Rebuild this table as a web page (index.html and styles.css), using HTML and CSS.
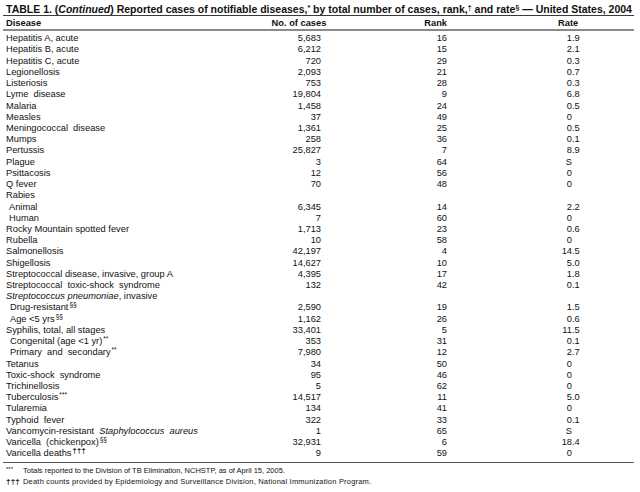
FILE: index.html
```html
<!DOCTYPE html>
<html>
<head>
<meta charset="utf-8">
<link rel="stylesheet" href="styles.css">
</head>
<body>
<div class="page">
  <div class="title">TABLE 1. (<i>Continued</i>) Reported cases of notifiable diseases,<span class="tsup">*</span> by total number of cases, rank,<span class="tsup">†</span> and rate<span class="tsup">§</span> — United States, 2004</div>
  <div class="row head">
    <span class="d">Disease</span>
    <span class="n">No. of cases</span>
    <span class="r">Rank</span>
    <span class="h">Rate</span>
  </div>
  <div class="body">
    <div class="row"><span class="d">Hepatitis A, acute</span><span class="n">5,683</span><span class="r">16</span><span class="t"><span class="i">1</span><span>.9</span></span></div>
    <div class="row"><span class="d">Hepatitis B, acute</span><span class="n">6,212</span><span class="r">15</span><span class="t"><span class="i">2</span><span>.1</span></span></div>
    <div class="row"><span class="d">Hepatitis C, acute</span><span class="n">720</span><span class="r">29</span><span class="t"><span class="i">0</span><span>.3</span></span></div>
    <div class="row"><span class="d">Legionellosis</span><span class="n">2,093</span><span class="r">21</span><span class="t"><span class="i">0</span><span>.7</span></span></div>
    <div class="row"><span class="d">Listeriosis</span><span class="n">753</span><span class="r">28</span><span class="t"><span class="i">0</span><span>.3</span></span></div>
    <div class="row"><span class="d ws">Lyme disease</span><span class="n">19,804</span><span class="r">9</span><span class="t"><span class="i">6</span><span>.8</span></span></div>
    <div class="row"><span class="d">Malaria</span><span class="n">1,458</span><span class="r">24</span><span class="t"><span class="i">0</span><span>.5</span></span></div>
    <div class="row"><span class="d">Measles</span><span class="n">37</span><span class="r">49</span><span class="t"><span class="i">0</span><span></span></span></div>
    <div class="row"><span class="d ws">Meningococcal disease</span><span class="n">1,361</span><span class="r">25</span><span class="t"><span class="i">0</span><span>.5</span></span></div>
    <div class="row"><span class="d">Mumps</span><span class="n">258</span><span class="r">36</span><span class="t"><span class="i">0</span><span>.1</span></span></div>
    <div class="row"><span class="d">Pertussis</span><span class="n">25,827</span><span class="r">7</span><span class="t"><span class="i">8</span><span>.9</span></span></div>
    <div class="row"><span class="d">Plague</span><span class="n">3</span><span class="r">64</span><span class="t"><span class="i">S</span><span></span></span></div>
    <div class="row"><span class="d">Psittacosis</span><span class="n">12</span><span class="r">56</span><span class="t"><span class="i">0</span><span></span></span></div>
    <div class="row"><span class="d">Q fever</span><span class="n">70</span><span class="r">48</span><span class="t"><span class="i">0</span><span></span></span></div>
    <div class="row"><span class="d">Rabies</span><span class="n"></span><span class="r"></span><span class="t"></span></div>
    <div class="row"><span class="d sub">Animal</span><span class="n">6,345</span><span class="r">14</span><span class="t"><span class="i">2</span><span>.2</span></span></div>
    <div class="row"><span class="d sub">Human</span><span class="n">7</span><span class="r">60</span><span class="t"><span class="i">0</span><span></span></span></div>
    <div class="row"><span class="d">Rocky Mountain spotted fever</span><span class="n">1,713</span><span class="r">23</span><span class="t"><span class="i">0</span><span>.6</span></span></div>
    <div class="row"><span class="d">Rubella</span><span class="n">10</span><span class="r">58</span><span class="t"><span class="i">0</span><span></span></span></div>
    <div class="row"><span class="d">Salmonellosis</span><span class="n">42,197</span><span class="r">4</span><span class="t"><span class="i">14</span><span>.5</span></span></div>
    <div class="row"><span class="d">Shigellosis</span><span class="n">14,627</span><span class="r">10</span><span class="t"><span class="i">5</span><span>.0</span></span></div>
    <div class="row"><span class="d">Streptococcal disease, invasive, group A</span><span class="n">4,395</span><span class="r">17</span><span class="t"><span class="i">1</span><span>.8</span></span></div>
    <div class="row"><span class="d ws">Streptococcal toxic-shock syndrome</span><span class="n">132</span><span class="r">42</span><span class="t"><span class="i">0</span><span>.1</span></span></div>
    <div class="row"><span class="d"><i>Streptococcus pneumoniae</i>, invasive</span><span class="n"></span><span class="r"></span><span class="t"></span></div>
    <div class="row"><span class="d sub2">Drug-resistant<span class="sup">§§</span></span><span class="n">2,590</span><span class="r">19</span><span class="t"><span class="i">1</span><span>.5</span></span></div>
    <div class="row"><span class="d sub2">Age &lt;5 yrs<span class="sup">§§</span></span><span class="n">1,162</span><span class="r">26</span><span class="t"><span class="i">0</span><span>.6</span></span></div>
    <div class="row"><span class="d">Syphilis, total, all stages</span><span class="n">33,401</span><span class="r">5</span><span class="t"><span class="i">11</span><span>.5</span></span></div>
    <div class="row"><span class="d sub2">Congenital (age &lt;1 yr)<span class="sup">**</span></span><span class="n">353</span><span class="r">31</span><span class="t"><span class="i">0</span><span>.1</span></span></div>
    <div class="row"><span class="d sub2 ws">Primary and secondary<span class="sup">**</span></span><span class="n">7,980</span><span class="r">12</span><span class="t"><span class="i">2</span><span>.7</span></span></div>
    <div class="row"><span class="d">Tetanus</span><span class="n">34</span><span class="r">50</span><span class="t"><span class="i">0</span><span></span></span></div>
    <div class="row"><span class="d ws">Toxic-shock syndrome</span><span class="n">95</span><span class="r">46</span><span class="t"><span class="i">0</span><span></span></span></div>
    <div class="row"><span class="d">Trichinellosis</span><span class="n">5</span><span class="r">62</span><span class="t"><span class="i">0</span><span></span></span></div>
    <div class="row"><span class="d">Tuberculosis<span class="sup">***</span></span><span class="n">14,517</span><span class="r">11</span><span class="t"><span class="i">5</span><span>.0</span></span></div>
    <div class="row"><span class="d">Tularemia</span><span class="n">134</span><span class="r">41</span><span class="t"><span class="i">0</span><span></span></span></div>
    <div class="row"><span class="d ws">Typhoid fever</span><span class="n">322</span><span class="r">33</span><span class="t"><span class="i">0</span><span>.1</span></span></div>
    <div class="row"><span class="d ws">Vancomycin-resistant <i>Staphylococcus aureus</i></span><span class="n">1</span><span class="r">65</span><span class="t"><span class="i">S</span><span></span></span></div>
    <div class="row"><span class="d ws">Varicella (chickenpox)<span class="sup">§§</span></span><span class="n">32,931</span><span class="r">6</span><span class="t"><span class="i">18</span><span>.4</span></span></div>
    <div class="row"><span class="d">Varicella deaths<span class="sup dag">†††</span></span><span class="n">9</span><span class="r">59</span><span class="t"><span class="i">0</span><span></span></span></div>
  </div>
  <div class="notes">
    <div class="note"><span class="mark"><span class="star">***</span></span><span>Totals reported to the Division of TB Elimination, NCHSTP, as of April 15, 2005.</span></div>
    <div class="note wide"><span class="mark dag2">†††</span><span>Death counts provided by Epidemiology and Surveillance Division, National Immunization Program.</span></div>
  </div>
</div>
</body>
</html>
```

FILE: styles.css
```css
html, body {
  margin: 0;
  padding: 0;
  background: #ffffff;
}
body {
  font-family: "Liberation Sans", Arial, sans-serif;
  color: #111;
}
.page {
  width: 631px;
  margin-left: 3px;
  padding-top: 3px;
}
.title {
  font-size: 10.5px;
  font-weight: bold;
  line-height: 12px;
  height: 12px;
  padding-left: 3px;
  white-space: nowrap;
  overflow: hidden;
  border-bottom: 1px solid #3a3a3a;
}
.title i {
  font-weight: bold;
}
.tsup {
  font-size: 7px;
  vertical-align: 3px;
  line-height: 0;
}
.row {
  display: grid;
  grid-template-columns: 268px 56px 120px 187px;
  font-size: 9.3px;
  line-height: 11.23px;
  height: 11.23px;
  white-space: nowrap;
}
.head {
  font-weight: bold;
  padding-top: 2px;
  border-bottom: 2px solid #8a8a8a;
}
.head .n {
  text-align: center;
  padding-right: 0;
}
.h {
  padding-left: 111px;
}
.body {
  padding-top: 2px;
  padding-bottom: 2.5px;
  border-bottom: 1px solid #555;
}
.d {
  padding-left: 3px;
}
.d.sub {
  padding-left: 6px;
}
.d.sub2 {
  padding-left: 7px;
}
.d.ws {
  word-spacing: 2.5px;
}
.n {
  text-align: right;
  padding-right: 6px;
}
.r {
  text-align: right;
}
.t {
  display: grid;
  grid-template-columns: 125px auto;
}
.t .i {
  text-align: right;
}
.sup {
  font-size: 6.5px;
  vertical-align: 3px;
  line-height: 0;
  word-spacing: 0;
  padding-left: 1px;
}
.sup.dag {
  font-size: 7.5px;
  font-weight: bold;
  letter-spacing: 0.3px;
}
.notes {
  padding-top: 2px;
}
.note {
  display: flex;
  font-size: 7.5px;
  line-height: 11px;
  height: 11px;
  white-space: nowrap;
}
.note.wide {
  letter-spacing: 0.2px;
}
.mark {
  width: 17px;
  padding-left: 3px;
  flex: none;
}
.star {
  font-size: 6px;
  position: relative;
  top: -2px;
}
.dag2 {
  font-weight: bold;
  font-size: 8px;
  letter-spacing: 0.2px;
}
```
